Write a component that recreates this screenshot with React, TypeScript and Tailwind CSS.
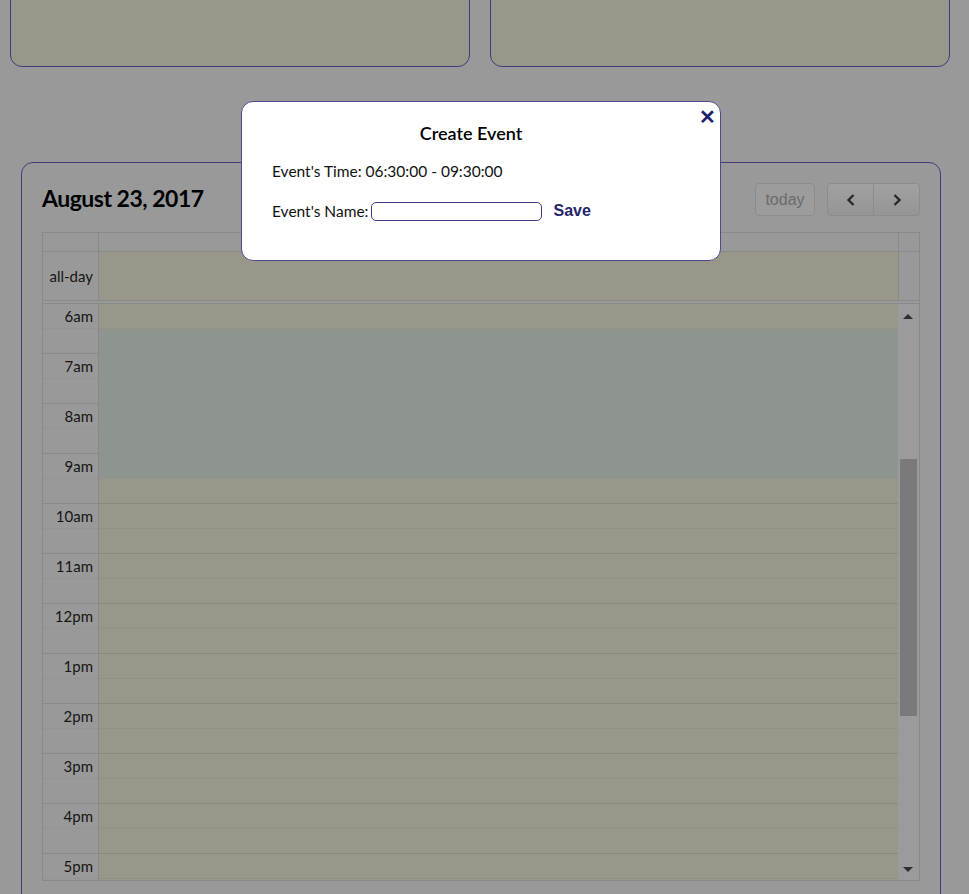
import React from "react";

const hours = ["6am", "7am", "8am", "9am", "10am", "11am", "12pm", "1pm", "2pm", "3pm", "4pm", "5pm"];

const font = { fontFamily: "Lato, 'Open Sans', sans-serif" };

function Chevron({ dir }: { dir: "left" | "right" }) {
  return (
    <svg width="12" height="14" viewBox="0 0 12 14" className="text-[#2a2a2a]">
      <path
        d={dir === "left" ? "M8.5 2 L3.5 7 L8.5 12" : "M3.5 2 L8.5 7 L3.5 12"}
        fill="none"
        stroke="currentColor"
        strokeWidth="2.4"
      />
    </svg>
  );
}

function CreateEventModal() {
  return (
    <div className="absolute left-[241px] top-[101px] w-[480px] h-[160px] bg-white border border-[#4b4b8c] rounded-[12px] pl-[30px] pr-[30px] pt-[17px]">
      <button className="absolute right-[4px] top-[4px] text-[#1f1f6b] text-[20px] font-bold leading-none">✕</button>
      <h2 className="text-center pr-[20px] text-[18px] font-semibold text-black leading-[28px]">Create Event</h2>
      <p className="mt-[14px] text-[15.5px] text-[#111] leading-[20px]">Event's Time: 06:30:00 - 09:30:00</p>
      <div className="mt-[20px] flex items-center text-[15.5px] text-[#111] leading-[20px]">
        <span>Event's Name:</span>
        <input className="ml-[3px] w-[171px] h-[19px] border border-[#3f3f7f] rounded-[5px] bg-white outline-none" />
        <button
          className="ml-[11px] text-[16px] font-bold text-[#24246b]"
          style={{ fontFamily: "'Liberation Sans', Arial, sans-serif" }}
        >
          Save
        </button>
      </div>
    </div>
  );
}

export default function App() {
  return (
    <div className="relative w-[969px] h-[894px] overflow-hidden bg-[#999999]" style={font}>
      {/* top panels, cut off above the viewport */}
      <div className="grid grid-cols-2 gap-[20px] pl-[10px] pr-[19px] -mt-[30px]">
        <div className="h-[97px] bg-[#98978a] border border-[#3d3d7a] rounded-[12px]" />
        <div className="h-[97px] bg-[#98978a] border border-[#3d3d7a] rounded-[12px]" />
      </div>

      {/* calendar card */}
      <div className="ml-[21px] mr-[28px] mt-[95px] h-[760px] border border-[#3d3d7a] rounded-[12px] px-[20px] pt-[20px]">
        <div className="flex items-start justify-between">
          <h1 className="text-[23px] font-bold text-black leading-[30px] tracking-[-0.5px]">August 23, 2017</h1>
          <div className="flex items-center gap-[12px]">
            <button
              className="w-[60px] h-[33px] rounded-[4px] border border-[#8c8c8c] bg-[#9c9c9c] text-[#6b6b6b] text-[16px]"
              style={{ fontFamily: "'Liberation Sans', Arial, sans-serif" }}
            >
              today
            </button>
            <div className="flex h-[33px] rounded-[4px] border border-[#8c8c8c] bg-gradient-to-b from-[#a1a1a1] to-[#959595] overflow-hidden">
              <button className="w-[46px] flex items-center justify-center border-r border-[#8c8c8c]">
                <Chevron dir="left" />
              </button>
              <button className="w-[45px] flex items-center justify-center">
                <Chevron dir="right" />
              </button>
            </div>
          </div>
        </div>

        {/* agenda table */}
        <div className="mt-[16px] w-[878px] border border-[#898989]">
          <div className="flex h-[19px] border-b border-[#898989]">
            <div className="w-[56px] border-r border-[#898989]" />
            <div className="flex-1 border-r border-[#898989]" />
            <div className="w-[20px]" />
          </div>
          <div className="flex h-[48px]">
            <div className="w-[56px] border-r border-[#898989] flex items-center justify-end pr-[5px] text-[15px] text-[#151515]">
              all-day
            </div>
            <div className="flex-1 bg-[#98978a] border-r border-[#898989]" />
            <div className="w-[20px]" />
          </div>
          <div className="h-[4px] border-y border-[#898989] bg-[#9a9a9a]" />
          <div className="flex h-[576px] overflow-hidden">
            <div className="w-[56px] border-r border-[#898989]">
              {hours.map((h) => (
                <div key={h}>
                  <div className="h-[25px] border-b border-dotted border-[#8f8f8f] flex items-center justify-end pr-[5px] text-[15px] text-[#151515]">
                    {h}
                  </div>
                  <div className="h-[25px] border-b border-[#898989]" />
                </div>
              ))}
            </div>
            <div className="relative flex-1 bg-[#98978a]">
              {hours.map((h) => (
                <div key={h}>
                  <div className="h-[25px] border-b border-dotted border-[#8d8c82]" />
                  <div className="h-[25px] border-b border-[#8a897f]" />
                </div>
              ))}
              {/* selected time range */}
              <div className="absolute left-0 right-0 top-[25px] h-[150px] bg-[#8d958e]/90" />
            </div>
            <div className="relative w-[21px] bg-[#9b9b9b]">
              <div className="absolute left-[5px] top-[10px] w-0 h-0 border-l-[5px] border-r-[5px] border-b-[5px] border-transparent border-b-[#2e2e2e]" />
              <div className="absolute left-[2px] top-[155px] w-[17px] h-[257px] bg-[#7a7a7a]" />
              <div className="absolute left-[5px] top-[563px] w-0 h-0 border-l-[5px] border-r-[5px] border-t-[5px] border-transparent border-t-[#2e2e2e]" />
            </div>
          </div>
        </div>
      </div>

      <CreateEventModal />
    </div>
  );
}
